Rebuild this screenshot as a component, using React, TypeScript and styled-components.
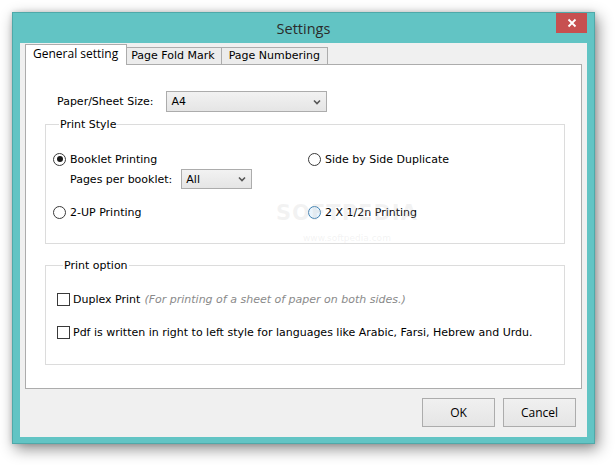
import React from "react";
import styled, { createGlobalStyle } from "styled-components";

const Global = createGlobalStyle`
  html, body { margin: 0; padding: 0; background: #ffffff; }
  body {
    font-family: "DejaVu Sans", Verdana, sans-serif;
    font-size: 11px;
    color: #000;
  }
  * { box-sizing: border-box; }
`;

const Page = styled.div`
  position: relative;
  width: 615px;
  height: 465px;
  padding: 12px 0 0 12px;
  overflow: hidden;
`;

const Window = styled.div`
  width: 583px;
  height: 432px;
  background: #62c4c4;
  border: 1px solid #4fa9a9;
  box-shadow: 3px 5px 14px rgba(0, 0, 0, 0.45), 0 0 5px rgba(0, 0, 0, 0.15);
  display: flex;
  flex-direction: column;
  padding: 0 7px 6px 7px;
`;

const TitleBar = styled.div`
  height: 30px;
  display: grid;
  grid-template-columns: 1fr auto 1fr;
  align-items: center;
`;

const Title = styled.div`
  grid-column: 2;
  font-family: "Open Sans", "Noto Sans", sans-serif;
  font-size: 14.5px;
  color: #2b2b2b;
  padding-top: 1px;
`;

const CloseButton = styled.div`
  grid-column: 3;
  justify-self: end;
  align-self: start;
  width: 31px;
  height: 20px;
  background: #c75050;
  color: #fff;
  display: flex;
  align-items: center;
  justify-content: center;
`;

const Client = styled.div`
  flex: 1;
  background: #f0f0f0;
  padding: 1px 5px 10px 5px;
  display: flex;
  flex-direction: column;
`;

const TabStrip = styled.div`
  height: 20px;
  display: flex;
  align-items: flex-start;
`;

const Tab = styled.div<{ $active?: boolean; $pl: number; $pr: number }>`
  position: relative;
  z-index: ${(p) => (p.$active ? 2 : 1)};
  margin-left: ${(p) => (p.$active ? "0" : "-1px")};
  margin-top: ${(p) => (p.$active ? "0" : "3px")};
  height: ${(p) => (p.$active ? "21px" : "17px")};
  padding: ${(p) => (p.$active ? "1px" : "0")} ${(p) => p.$pr}px 0 ${(p) => p.$pl}px;
  border: 1px solid #acacac;
  border-bottom: none;
  background: ${(p) => (p.$active ? "#ffffff" : "#ececec")};
  font-family: ${(p) =>
    p.$active ? '"Open Sans", "Noto Sans", sans-serif' : '"DejaVu Sans", Verdana, sans-serif'};
  font-size: ${(p) => (p.$active ? "12px" : "11px")};
  line-height: 16px;
  white-space: nowrap;
`;

const Panel = styled.div`
  height: 325px;
  border: 1px solid #acacac;
  background: #ffffff;
  display: flex;
  flex-direction: column;
  padding: 26px 0 0 19px;
`;

const PaperRow = styled.div`
  display: flex;
  align-items: center;
  gap: 13px;
  padding-left: 12px;
  height: 21px;
`;

const Label = styled.span`
  white-space: nowrap;
`;

const Select = styled.div<{ $w: number; $h: number }>`
  width: ${(p) => p.$w}px;
  height: ${(p) => p.$h}px;
  border: 1px solid #acacac;
  background: linear-gradient(#f2f2f2, #e5e5e5);
  display: flex;
  align-items: center;
  justify-content: space-between;
  padding: 0 5px 0 4px;
`;

const Group = styled.fieldset<{ $mt: number; $pt: number; $pb: number; $pl: number }>`
  margin: ${(p) => p.$mt}px 0 0 0;
  width: 520px;
  border: 1px solid #dcdcdc;
  padding: ${(p) => p.$pt}px 0 ${(p) => p.$pb}px ${(p) => p.$pl}px;
  min-width: 0;
`;

const Legend = styled.legend`
  margin-left: 6px;
  padding: 0 1px;
  line-height: 13px;
  height: 13px;
`;

const StyleGrid = styled.div`
  display: grid;
  grid-template-columns: 255px 1fr;
  grid-template-rows: 16px 22px 31px;
`;

const Cell = styled.div<{ $row: number; $col: number }>`
  grid-row: ${(p) => p.$row};
  grid-column: ${(p) => p.$col};
  display: flex;
  align-items: center;
  align-self: end;
  height: 16px;
  gap: 4px;
  white-space: nowrap;
`;

const SubRow = styled.div`
  grid-row: 2;
  grid-column: 1;
  align-self: end;
  display: flex;
  align-items: center;
  gap: 9px;
  padding-left: 17px;
`;

const Radio = styled.span<{ $checked?: boolean; $hover?: boolean }>`
  width: 13px;
  height: 13px;
  border-radius: 50%;
  border: 1px solid ${(p) => (p.$hover ? "#3c7fb1" : "#3a3a3a")};
  background: ${(p) => (p.$hover ? "#eaf4fc" : "#ffffff")};
  display: flex;
  align-items: center;
  justify-content: center;
  flex: none;
  &::after {
    content: "";
    width: 6px;
    height: 6px;
    border-radius: 50%;
    background: ${(p) => (p.$checked ? "#1a1a1a" : "transparent")};
  }
`;

const OptionList = styled.div`
  display: flex;
  flex-direction: column;
  gap: 18px;
`;

const CheckRow = styled.div`
  display: flex;
  align-items: center;
  gap: 3px;
  height: 15px;
  white-space: nowrap;
`;

const Check = styled.span`
  width: 13px;
  height: 13px;
  border: 1px solid #3a3a3a;
  background: #ffffff;
  flex: none;
`;

const Note = styled.span`
  color: #8a8a8a;
  font-style: italic;
  margin-left: 4px;
`;

const ButtonRow = styled.div`
  margin-top: 9px;
  display: flex;
  justify-content: flex-end;
  gap: 8px;
  padding-right: 6px;
`;

const Button = styled.div`
  width: 73px;
  height: 29px;
  border: 1px solid #acacac;
  background: linear-gradient(#f0f0f0, #e5e5e5);
  font-family: "Open Sans", "Noto Sans", sans-serif;
  font-size: 12px;
  display: flex;
  align-items: center;
  justify-content: center;
`;

const Watermark = styled.div`
  position: absolute;
  left: 276px;
  top: 201px;
  display: flex;
  flex-direction: column;
  align-items: center;
  pointer-events: none;
  color: rgba(200, 200, 200, 0.22);
  font-family: "DejaVu Sans", sans-serif;
`;

const WmBig = styled.div`
  font-size: 21px;
  font-weight: bold;
  letter-spacing: 1px;
  line-height: 24px;
`;

const WmSmall = styled.div`
  font-size: 9px;
  line-height: 12px;
  margin-top: 7px;
`;

const Chevron = () => (
  <svg width="8" height="6" viewBox="0 0 8 6">
    <polyline points="1,1.5 4,4.5 7,1.5" fill="none" stroke="#555" strokeWidth="1.6" />
  </svg>
);

const CloseIcon = () => (
  <svg width="10" height="10" viewBox="0 0 10 10">
    <path d="M1.5 1.5 L8.5 8.5 M8.5 1.5 L1.5 8.5" stroke="#fff" strokeWidth="1.8" />
  </svg>
);

export default function App() {
  return (
    <>
      <Global />
      <Page>
        <Window>
          <TitleBar>
            <Title>Settings</Title>
            <CloseButton>
              <CloseIcon />
            </CloseButton>
          </TitleBar>
          <Client>
            <TabStrip>
              <Tab $active $pl={7} $pr={8}>General setting</Tab>
              <Tab $pl={4} $pr={6}>Page Fold Mark</Tab>
              <Tab $pl={7} $pr={7}>Page Numbering</Tab>
            </TabStrip>
            <Panel>
              <PaperRow>
                <Label>Paper/Sheet Size:</Label>
                <Select $w={161} $h={21}>
                  <span>A4</span>
                  <Chevron />
                </Select>
              </PaperRow>
              <Group $mt={6} $pt={20} $pb={23} $pl={7}>
                <Legend>Print Style</Legend>
                <StyleGrid>
                  <Cell $row={1} $col={1}>
                    <Radio $checked />
                    <span>Booklet Printing</span>
                  </Cell>
                  <Cell $row={1} $col={2}>
                    <Radio />
                    <span>Side by Side Duplicate</span>
                  </Cell>
                  <SubRow>
                    <Label>Pages per booklet:</Label>
                    <Select $w={71} $h={20}>
                      <span>All</span>
                      <Chevron />
                    </Select>
                  </SubRow>
                  <Cell $row={3} $col={1}>
                    <Radio />
                    <span>2-UP Printing</span>
                  </Cell>
                  <Cell $row={3} $col={2}>
                    <Radio $hover />
                    <span>2 X 1/2n Printing</span>
                  </Cell>
                </StyleGrid>
              </Group>
              <Group $mt={15} $pt={20} $pb={24} $pl={11}>
                <Legend>Print option</Legend>
                <OptionList>
                  <CheckRow>
                    <Check />
                    <span>
                      Duplex Print<Note>(For printing of a sheet of paper on both sides.)</Note>
                    </span>
                  </CheckRow>
                  <CheckRow>
                    <Check />
                    <span>
                      Pdf is written in right to left style for languages like Arabic, Farsi, Hebrew and Urdu.
                    </span>
                  </CheckRow>
                </OptionList>
              </Group>
            </Panel>
            <ButtonRow>
              <Button>OK</Button>
              <Button>Cancel</Button>
            </ButtonRow>
          </Client>
        </Window>
        <Watermark>
          <WmBig>SOFTPEDIA</WmBig>
          <WmSmall>www.softpedia.com</WmSmall>
        </Watermark>
      </Page>
    </>
  );
}
